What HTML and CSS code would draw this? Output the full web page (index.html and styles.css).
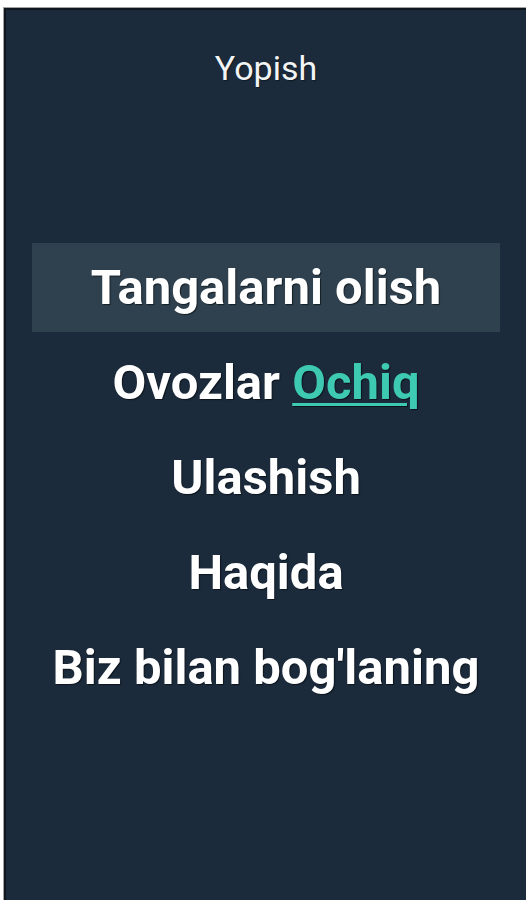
FILE: index.html
```html
<!DOCTYPE html>
<html lang="uz">
<head>
<meta charset="utf-8">
<title>Menyu</title>
<link rel="stylesheet" href="styles.css">
</head>
<body>
<div class="frame">
  <div class="screen">
    <div class="close">Yopish</div>
    <ul class="menu">
      <li class="item active">Tangalarni olish</li>
      <li class="item">Ovozlar <a class="toggle" href="#">Ochiq</a></li>
      <li class="item">Ulashish</li>
      <li class="item">Haqida</li>
      <li class="item">Biz bilan bog'laning</li>
    </ul>
  </div>
</div>
</body>
</html>
```
FILE: styles.css
```css
html, body {
  margin: 0;
  padding: 0;
  background: #ffffff;
  height: 900px;
  overflow: hidden;
}
.frame {
  margin: 7px 0 0 3px;
  border-top: 1px solid #a3a3a3;
  border-left: 1px solid #a3a3a3;
}
.screen {
  height: 892px;
  box-sizing: border-box;
  border-top: 2px solid #0f161d;
  border-left: 2px solid #0f161d;
  background: #1b2b3c;
  display: flex;
  flex-direction: column;
  align-items: center;
  font-family: Roboto, "Liberation Sans", sans-serif;
  color: #ffffff;
}
.close {
  margin-top: 38px;
  font-size: 34px;
  line-height: 40px;
  color: #f2f4f6;
  text-shadow: 1px 1px 1px rgba(0,0,0,0.4);
}
.menu {
  list-style: none;
  margin: 155px 0 0 0;
  padding: 0 26px;
  align-self: stretch;
  display: flex;
  flex-direction: column;
  gap: 6px;
}
.item {
  height: 89px;
  line-height: 89px;
  text-align: center;
  font-size: 49px;
  font-weight: 700;
  text-shadow: 1px 1px 1px rgba(0,0,0,0.55);
}
.item.active {
  background: #2f414f;
}
.toggle {
  color: #3ec9b2;
  text-decoration: underline;
  text-decoration-thickness: 3px;
  text-underline-offset: 4px;
}
```
